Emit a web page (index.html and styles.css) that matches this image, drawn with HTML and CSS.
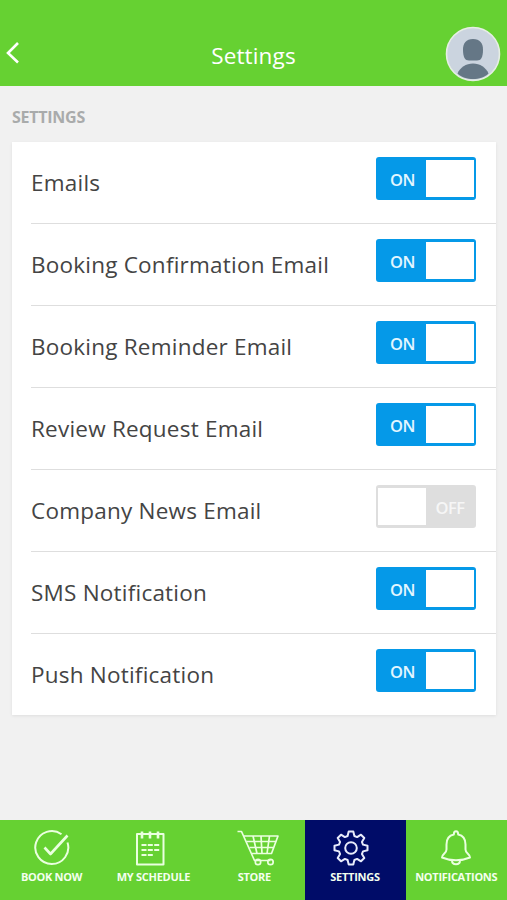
FILE: index.html
```html
<!DOCTYPE html>
<html lang="en">
<head>
    <meta charset="UTF-8">
    <meta name="viewport" content="width=device-width, initial-scale=1.0">
    <title>Settings</title>
    <link rel="stylesheet" href="styles.css">
</head>
<body>
    <header class="header">
        <a class="back" href="#" aria-label="Back">
            <svg width="16" height="24" viewBox="0 0 16 24"><path d="M13 2 3 12 13 21.500"/></svg>
        </a>
        <h1>Settings</h1>
        <svg class="avatar" width="56" height="56" viewBox="0 0 56 56">
            <circle cx="28" cy="28" r="26.500" fill="#cbd4df" stroke="#e6eee4" stroke-width="1.6"/>
            <path d="M28 13c7 0 10 4.500 10 10.500 0 8-2 11-6 11H24c-4 0-6-3-6-11 0-6 3-10.500 10-10.500z" fill="#657786"/>
            <path d="M12.500 47.500c2.500-6 8.500-10 15.500-10s13 4 15.500 10c-4 4-9.500 5.500-15.500 5.500s-11.500-1.500-15.500-5.500z" fill="#657786"/>
        </svg>
    </header>
    <main>
        <h2>SETTINGS</h2>
        <ul class="settings-list">
            <li><span>Emails</span><button class="toggle on">ON</button></li>
            <li><span>Booking Confirmation Email</span><button class="toggle on">ON</button></li>
            <li><span>Booking Reminder Email</span><button class="toggle on">ON</button></li>
            <li><span>Review Request Email</span><button class="toggle on">ON</button></li>
            <li><span>Company News Email</span><button class="toggle off">OFF</button></li>
            <li><span>SMS Notification</span><button class="toggle on">ON</button></li>
            <li><span>Push Notification</span><button class="toggle on">ON</button></li>
        </ul>
    </main>
    <nav class="tabs">
        <a class="tab" href="#">
            <svg width="38" height="38" viewBox="0 0 38 38">
                <path d="M28.500 5.200A16.500 16.500 0 1 0 34.500 13.500"/>
                <path class="thick" d="M11.500 18.500l6 6.500L34.500 6.500"/>
            </svg>
            <span>BOOK NOW</span>
        </a>
        <a class="tab schedule" href="#">
            <svg width="38" height="38" viewBox="0 0 38 38">
                <path d="M6 5h26.500V35.500H6z"/>
                <path class="thick" d="M11 2.500v7M19 2.500v7M27 2.500v7"/>
                <path d="M10.500 16h5M16.800 16h5M23.200 16h5M10.500 21h5M16.800 21h5M23.200 21h5M10.500 26h5M16.800 26h5"/>
            </svg>
            <span>MY SCHEDULE</span>
        </a>
        <a class="tab store" href="#">
            <svg width="44" height="38" viewBox="0 0 44 38">
                <path d="M1.500 2.500h4L18.500 31.500h16"/>
                <path d="M8 7h34l-6.500 17.500H16M10.500 12.500h29.500M13.500 18.500h24M17 7l4 17.500M25 7l1 17.500M33.500 7l-2.500 17.500"/>
                <circle cx="22" cy="33" r="2.700"/>
                <circle cx="34.500" cy="33" r="2.700"/>
            </svg>
            <span>STORE</span>
        </a>
        <a class="tab active" href="#">
            <svg width="38" height="38" viewBox="-19 -19 38 38">
                <path d="M-3.400-12-2.300-16.500H2.300L3.400-12 6.100-10.900 10-13.300 13.300-10 10.900-6.100 12-3.400 16.500-2.300V2.300L12 3.400 10.900 6.100 13.300 10 10 13.300 6.100 10.900 3.400 12 2.300 16.500H-2.300L-3.400 12-6.100 10.900-10 13.300-13.300 10-10.900 6.100-12 3.400-16.500 2.300V-2.300L-12-3.400-10.900-6.100-13.300-10-10-13.300-6.100-10.900z"/>
                <circle r="5.800"/>
            </svg>
            <span>SETTINGS</span>
        </a>
        <a class="tab" href="#">
            <svg width="38" height="38" viewBox="0 0 38 38">
                <path d="M16.800 5.500c0-4.500 4.400-4.500 4.400 0 5 1 7.300 5 7.300 10v5c0 4 4.500 4.500 4.500 8-8 3.500-20 3.500-28 0 0-3.500 4.500-4 4.500-8v-5c0-5 2.300-9 7.300-10z"/>
                <path d="M15 31.500c0 5 8 5 8 0"/>
            </svg>
            <span>NOTIFICATIONS</span>
        </a>
    </nav>
</body>
</html>
```
FILE: styles.css
```css
* {
    box-sizing: border-box;
}

body {
    display: flex;
    flex-direction: column;
    height: 900px;
    margin: 0;
    font-family: "Open Sans", sans-serif;
    background-color: #f1f1f1;
}

svg {
    display: block;
}

.header {
    display: grid;
    grid-template-columns: 62px 1fr 62px;
    height: 86px;
    padding-top: 26px;
    background-color: #66d132;
}

.back {
    padding: 15px 0 0 5px;
}

.back path {
    fill: none;
    stroke: #fff;
    stroke-width: 2.6;
}

.header h1 {
    margin: 14px 0 0;
    font-size: 22.5px;
    font-weight: 500;
    line-height: 32px;
    letter-spacing: 0.15px;
    text-align: center;
    color: #fff;
}

main {
    flex: 1;
    padding: 0 11px 0 12px;
}

h2 {
    margin: 18px 0 12px;
    font-size: 16px;
    font-weight: 700;
    line-height: 26px;
    letter-spacing: -0.25px;
    color: #a9abab;
}

.settings-list {
    margin: 0;
    padding: 0 0 0 19px;
    list-style: none;
    background-color: #fff;
    box-shadow: 0 1px 3px rgba(0, 0, 0, 0.08);
}

.settings-list li {
    display: flex;
    justify-content: space-between;
    height: 82.05px;
    padding: 15px 20px 0 0;
    border-bottom: 1px solid #dedede;
}

.settings-list li:last-child {
    height: 81px;
    border-bottom: none;
}

.settings-list span {
    margin-top: 10px;
    font-size: 22.5px;
    line-height: 32px;
    letter-spacing: 0.22px;
    color: #444;
}

.toggle {
    width: 100px;
    height: 43px;
    padding: 1px 0 0;
    border: 3px solid #0599e8;
    border-width: 3px 2.5px;
    border-radius: 3px;
    font-family: inherit;
    font-size: 16.5px;
    font-weight: 600;
    letter-spacing: -0.5px;
    color: #e3f6ff;
}

.toggle.on {
    padding-right: 47px;
    background: linear-gradient(to right, #0599e8 48px, #fff 48px);
}

.toggle.off {
    padding-left: 48px;
    border-color: #dedede;
    background: linear-gradient(to right, #fff 48px, #dedede 48px);
    color: #f6f6f6;
}

.tabs {
    display: grid;
    grid-template-columns: 103px 101px 100.500px 101px 1fr;
    height: 80px;
    background-color: #66d132;
}

.tab {
    display: flex;
    flex-direction: column;
    align-items: center;
    padding-top: 9px;
    font-size: 11px;
    font-weight: 700;
    line-height: 16px;
    letter-spacing: -0.28px;
    color: #f4ffef;
    text-decoration: none;
}

.tab span {
    margin-top: 2px;
}

.tab.active {
    background-color: #000c68;
}

.tab.schedule svg,
.tab.active svg {
    margin-right: 8px;
}

.tab.store svg {
    margin-left: 7px;
}

.tab svg {
    fill: none;
    stroke: #eaffdf;
    stroke-width: 2;
    stroke-linejoin: round;
}

.tab.store svg {
    stroke-width: 1.7;
}

.tab.active svg {
    stroke: #e8ecfb;
}

.tab .thick {
    stroke-width: 2.6;
}
```
